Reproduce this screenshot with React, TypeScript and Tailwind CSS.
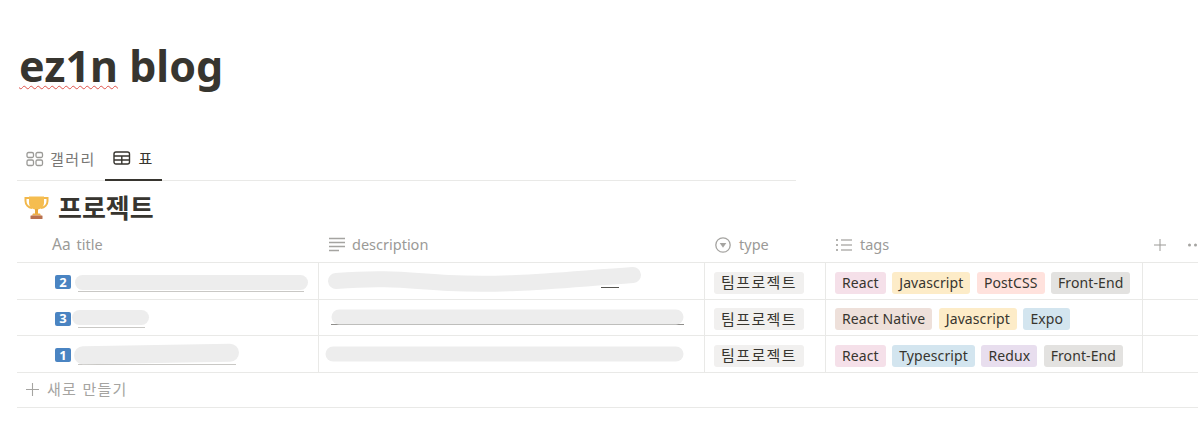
import React from "react";

const sans = "font-['Noto_Sans','Noto_Sans_CJK_KR',sans-serif]";

const tagColors: Record<string, string> = {
  React: "bg-[#f5e0e9]",
  Javascript: "bg-[#fdecc8]",
  PostCSS: "bg-[#ffe2dd]",
  "Front-End": "bg-[#e3e2e0]",
  "React Native": "bg-[#eee0da]",
  Expo: "bg-[#d3e5ef]",
  Typescript: "bg-[#d3e5ef]",
  Redux: "bg-[#e8deee]",
};

function Trophy() {
  return (
    <svg width="25" height="25" viewBox="0 0 25 25">
      <path d="M5 3H1.5v3c0 4 3 6.5 6.5 7" fill="none" stroke="#f2b84b" strokeWidth="2" />
      <path d="M20 3h3.5v3c0 4-3 6.5-6.5 7" fill="none" stroke="#f2b84b" strokeWidth="2" />
      <path d="M5 1.5h15v6c0 4.5-3 7-7.5 7S5 12 5 7.500z" fill="#f5bd50" />
      <rect x="11" y="14" width="3" height="5" fill="#e9a93c" />
      <path d="M9 18.500h7l1 2H8z" fill="#eeb04a" />
      <rect x="6.500" y="20.500" width="12" height="3.500" rx="0.500" fill="#b9714f" />
    </svg>
  );
}

function GalleryIcon() {
  return (
    <svg width="18" height="16" viewBox="0 0 18 16" fill="none" stroke="#9b9a97" strokeWidth="1.300">
      <rect x="1" y="1.500" width="6.500" height="5" rx="1.500" />
      <rect x="10" y="1.500" width="6.500" height="5" rx="1.500" />
      <rect x="1" y="9" width="6.500" height="5.500" rx="1.500" />
      <rect x="10" y="9" width="6.500" height="5.500" rx="1.500" />
    </svg>
  );
}

function TableIcon() {
  return (
    <svg width="18" height="16" viewBox="0 0 18 16" fill="none" stroke="#37352f" strokeWidth="1.400">
      <rect x="1" y="2" width="15.500" height="12" rx="2" />
      <path d="M1 6h15.500M1 10h15.500M8.800 6v8" />
    </svg>
  );
}

function TextIcon() {
  return (
    <svg width="16" height="16" viewBox="0 0 16 16" stroke="#a5a4a1" strokeWidth="1.400">
      <path d="M0 1.500h16M0 5.500h16M0 9.500h16M0 13.500h10" />
    </svg>
  );
}

function SelectIcon() {
  return (
    <svg width="16" height="16" viewBox="0 0 16 16">
      <circle cx="8" cy="8" r="7.200" fill="none" stroke="#a5a4a1" strokeWidth="1.300" />
      <path d="M4.700 6h6.600L8 10.800z" fill="#a5a4a1" />
    </svg>
  );
}

function ListIcon() {
  return (
    <svg width="16" height="14" viewBox="0 0 16 14" stroke="#b4b3b0" strokeWidth="1.400">
      <path d="M5 2h11M5 7h11M5 12h11" />
      <path d="M0 2h2M0 7h2M0 12h2" strokeWidth="2" />
    </svg>
  );
}

function PlusIcon({ size, color }: { size: number; color: string }) {
  return (
    <svg width={size} height={size} viewBox="0 0 12 12" stroke={color} strokeWidth="1">
      <path d="M6 0v12M0 6h12" />
    </svg>
  );
}

function DotsIcon() {
  return (
    <svg width="9" height="4" viewBox="0 0 9 4" fill="#a5a4a1">
      <circle cx="1.500" cy="2" r="1.500" />
      <circle cx="7.500" cy="2" r="1.500" />
    </svg>
  );
}

function Keycap({ n }: { n: number }) {
  return (
    <span className="mt-[2px] flex h-[14px] w-[16px] shrink-0 items-center justify-center rounded-[2px] bg-[#4a84c2] text-[13px] font-bold leading-none text-white">
      {n}
    </span>
  );
}

function Pill({ label, className }: { label: string; className: string }) {
  return (
    <span className={`flex h-[22px] items-center rounded-[3px] px-[7px] leading-none text-[#37352f] ${className}`}>
      {label}
    </span>
  );
}

const rows = [
  {
    n: 2,
    h: "h-[37px]",
    titleLine: "w-[226px]",
    tags: ["React", "Javascript", "PostCSS", "Front-End"],
    titleBlob: "left-[58px] top-[12px] h-[15px] w-[233px]",
    descPath: "M17 18 C70 14 90 18 130 20 C190 23 240 17 314 12",
    descLine: "ml-[273px] w-[18px] bg-[#55544f]",
    descStroke: 16,
  },
  {
    n: 3,
    h: "h-[36px]",
    titleLine: "w-[67px]",
    tags: ["React Native", "Javascript", "Expo"],
    titleBlob: "left-[55px] top-[10px] h-[15px] w-[77px]",
    descPath: "M20 17 H357",
    descLine: "ml-[3px] w-[353px] bg-[#8f8e8b]",
    descStroke: 15,
  },
  {
    n: 1,
    h: "h-[37px]",
    titleLine: "w-[158px]",
    tags: ["React", "Typescript", "Redux", "Front-End"],
    titleBlob: "left-[57px] top-[9px] h-[18px] w-[165px] -rotate-1",
    descPath: "M14 18 H357",
    descLine: "ml-[8px] w-[340px] bg-[#dddcda]",
    descStroke: 15,
  },
];

export default function App() {
  return (
    <div className={`h-[448px] w-[1198px] overflow-hidden bg-white pl-[17px] text-[#37352f] ${sans}`}>
      <h1 className="pl-[2px] pt-[36px] text-[43px] font-bold leading-[60px]">
        <span className="underline decoration-[#e0524a] decoration-wavy decoration-1 underline-offset-[3px] [text-decoration-skip-ink:none]">
          ez1n
        </span>{" "}
        blog
      </h1>

      <div className="mt-[45px] flex h-[40px] w-[779px] border-b border-[#e9e9e7]">
        <div className="flex h-[40px] items-center gap-[6px] px-[9px] pb-[4px] text-[15px] tracking-[1.400px] text-[#787774]">
          <GalleryIcon />
          <span>갤러리</span>
        </div>
        <div className="flex h-[40px] w-[57px] items-center gap-[8px] border-b-2 border-[#37352f] pb-[4px] pl-[8px] text-[15px] text-[#37352f]">
          <TableIcon />
          <span>표</span>
        </div>
      </div>

      <div className="flex h-[45px] items-center gap-[9px] pl-[7px] pt-[8px]">
        <Trophy />
        <span className="text-[26px] font-bold leading-none">프로젝트</span>
      </div>

      <div className="w-[1300px]">
        <div className="grid h-[37px] grid-cols-[302px_386px_121px_317px_174px] border-b border-[#e9e9e7] pt-[1px] text-[14.500px] text-[#9b9a97]">
          <div className="flex items-center gap-[6px] pl-[35px]">
            <span className="text-[15.500px]">Aa</span>
            <span>title</span>
          </div>
          <div className="flex items-center gap-[7px] pl-[10px]">
            <TextIcon />
            <span>description</span>
          </div>
          <div className="flex items-center gap-[8px] pl-[10px]">
            <SelectIcon />
            <span>type</span>
          </div>
          <div className="flex items-center gap-[8px] pl-[10px]">
            <ListIcon />
            <span>tags</span>
          </div>
          <div className="flex items-center gap-[22px] pl-[11px]">
            <PlusIcon size={12} color="#9b9a97" />
            <DotsIcon />
          </div>
        </div>

        {rows.map((r) => (
          <div
            key={r.n}
            className={`grid ${r.h} grid-cols-[302px_386px_121px_317px_174px] border-b border-[#e9e9e7]`}
          >
            <div className="relative flex items-center gap-[7px] border-r border-[#e9e9e7] pl-[38px]">
              <Keycap n={r.n} />
              <span className={`mt-[20px] h-px ${r.titleLine} bg-[#c9c8c5]`} />
              <span className={`absolute rounded-full bg-[#ededed] ${r.titleBlob}`} />
            </div>
            <div className="relative flex items-center border-r border-[#e9e9e7] pl-[9px]">
              <span className={`mt-[13px] h-px ${r.descLine}`} />
              <svg className="absolute left-0 top-0" width="385" height="36" fill="none">
                <path d={r.descPath} stroke="#ededed" strokeWidth={r.descStroke} strokeLinecap="round" />
              </svg>
            </div>
            <div className="flex items-center border-r border-[#e9e9e7] pl-[9px] pt-[3px]">
              <Pill label="팀프로젝트" className="bg-[#f1f0ef] text-[15px] tracking-[1.400px]" />
            </div>
            <div className="flex items-center gap-[6.500px] border-r border-[#e9e9e7] pl-[9px] pt-[3px]">
              {r.tags.map((t) => (
                <Pill key={t} label={t} className={`text-[14px] tracking-[0.100px] ${tagColors[t]}`} />
              ))}
            </div>
            <div />
          </div>
        ))}

        <div className="flex h-[35px] items-center gap-[8px] border-b border-[#e9e9e7] pb-[2px] pl-[9px] text-[15px] tracking-[1.300px] text-[#a5a4a1]">
          <PlusIcon size={13} color="#a5a4a1" />
          <span>새로 만들기</span>
        </div>
      </div>
    </div>
  );
}
